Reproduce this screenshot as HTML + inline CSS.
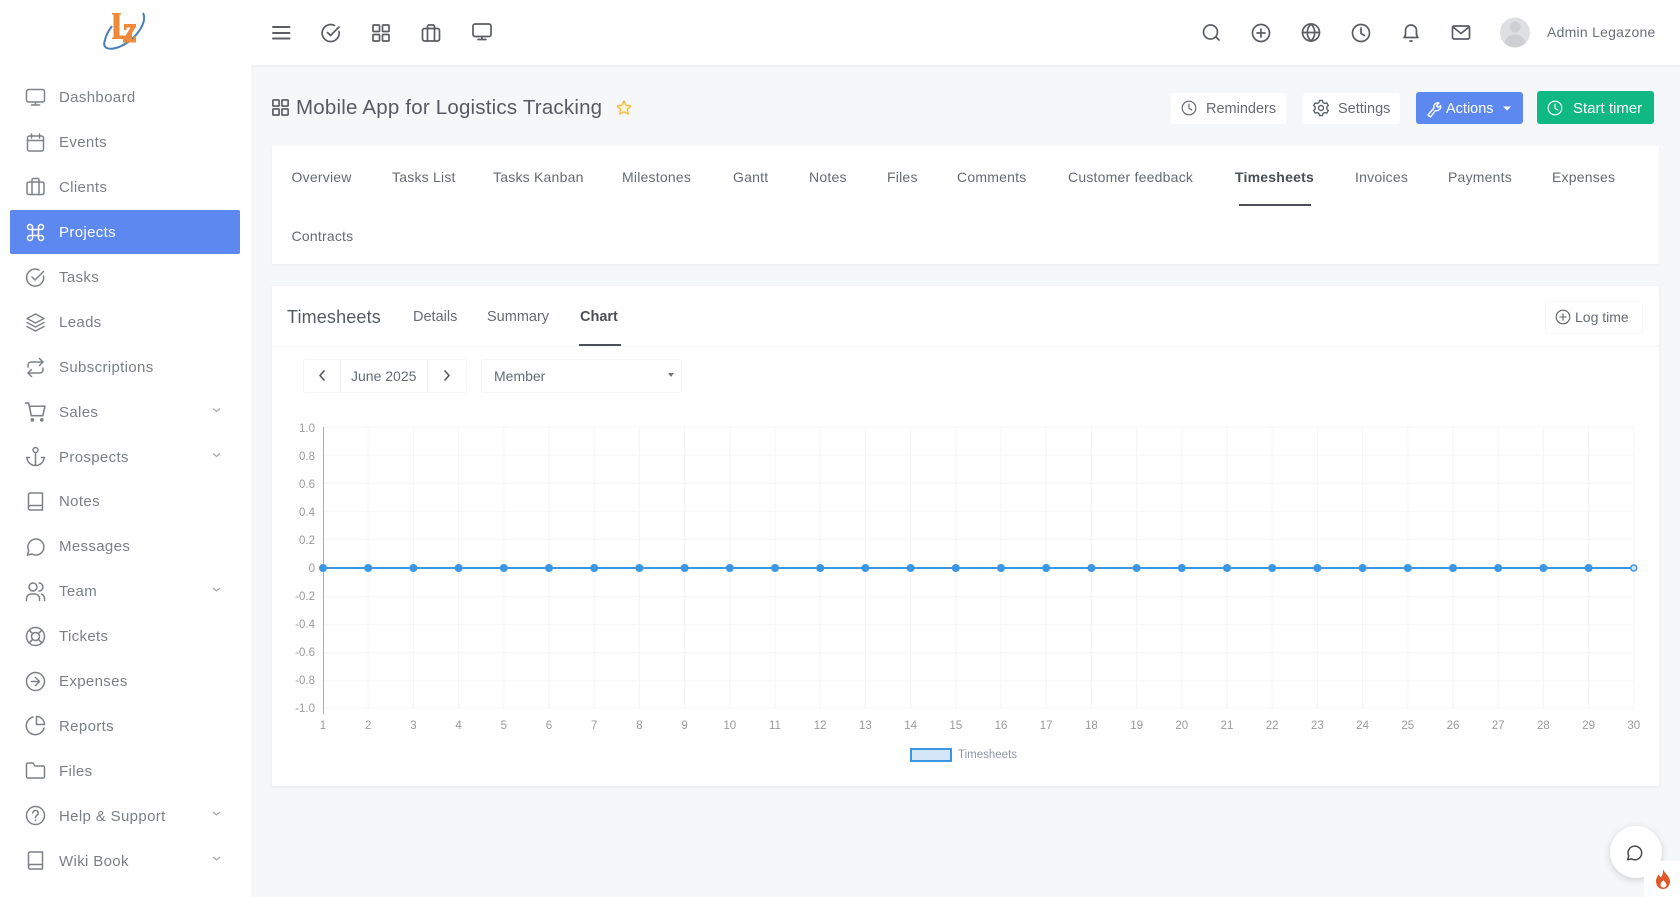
<!DOCTYPE html>
<html lang="en"><head><meta charset="utf-8"><title>Timesheets</title>
<style>
html,body{margin:0;padding:0;width:1680px;height:897px;overflow:hidden;background:#f6f7f8;font-family:"Liberation Sans",sans-serif;color:#6b7078}
.a{position:absolute}
.t{position:absolute;white-space:nowrap;line-height:20px;height:20px}
.s{font-size:15px;color:#7b7f86;left:59px;letter-spacing:.35px}
.tab{font-size:14px;color:#666b73;top:166.500px;letter-spacing:.22px}
.sub{font-size:14.500px;color:#666b73;top:307px}
.btn{position:absolute;background:#fff;border-radius:3px}
.yl{position:absolute;width:30px;left:285px;text-align:right;font-size:11.500px;line-height:14px;color:#9a9a9a}
.xl{position:absolute;width:30px;top:719px;text-align:center;font-size:11.500px;line-height:14px;color:#9a9a9a}
svg{position:absolute;left:0;top:0;overflow:visible}
</style></head><body>
<div class="a" style="left:0;top:0;width:1680px;height:65px;background:#fff"></div>
<div class="a" style="left:0;top:65px;width:1680px;height:2px;background:#eff0f1"></div>
<div class="a" style="left:0;top:65px;width:251px;height:832px;background:#fff"></div>
<div class="a" style="left:10px;top:210px;width:230px;height:44px;background:#5d88f0;border-radius:2px"></div>
<div class="a" style="left:272px;top:146px;width:1387px;height:118px;background:#fff;box-shadow:0 1px 2px #eceef0"></div>
<div class="a" style="left:272px;top:286px;width:1387px;height:500px;background:#fff;box-shadow:0 1px 3px #e6e8ea"></div>
<div class="a" style="left:272px;top:346px;width:1387px;height:1px;background:#f4f5f6"></div>
<div class="a" style="left:1239px;top:204px;width:72px;height:2px;background:#4c5056"></div>
<div class="a" style="left:579px;top:344px;width:42px;height:2px;background:#4c5056"></div>
<div class="btn" style="left:1171px;top:93px;width:116px;height:31px"></div>
<div class="btn" style="left:1303px;top:93px;width:97px;height:31px"></div>
<div class="btn" style="left:1416px;top:92px;width:107px;height:32px;background:#5d88f0"></div>
<div class="btn" style="left:1537px;top:91px;width:117px;height:33px;background:#10b981"></div>
<div class="btn" style="left:1545px;top:301px;width:96px;height:31px;border:1px solid #f5f6f7"></div>
<div class="btn" style="left:303px;top:359px;width:162px;height:32px;border:1px solid #f4f5f6"></div>
<div class="a" style="left:340px;top:359px;width:1px;height:33px;background:#f4f5f6"></div>
<div class="a" style="left:427px;top:359px;width:1px;height:33px;background:#f4f5f6"></div>
<div class="btn" style="left:481px;top:359px;width:199px;height:32px;border:1px solid #f4f5f6"></div>
<div class="a" style="left:1610px;top:826px;width:52px;height:52px;border-radius:50%;background:#fff;box-shadow:0 2px 8px rgba(0,0,0,.16)"></div>
<div class="a" style="left:1644px;top:861px;width:36px;height:36px;background:#fff"></div>

<svg width="1680" height="897" viewBox="0 0 1680 897">
<defs>
<symbol id="mon" viewBox="0 0 20 20"><rect x="1" y="2" width="18" height="12.500" rx="2"/><path d="M10 14.500v3M6 17.500h8"/></symbol>
<symbol id="cal" viewBox="0 0 20 20"><rect x="2" y="3.500" width="16" height="15" rx="2"/><path d="M2 8h16M6 1.500v4M14 1.500v4"/></symbol>
<symbol id="brief" viewBox="0 0 20 20"><rect x="1.500" y="5.500" width="17" height="12.500" rx="2"/><path d="M6.500 18V3.500a1.500 1.500 0 0 1 1.500-1.500h4a1.500 1.500 0 0 1 1.500 1.500V18"/></symbol>
<symbol id="cmd" viewBox="0 0 20 20"><path d="M7 7h6v6H7zM7 7V4.500A2.500 2.500 0 1 0 4.500 7H7M13 7h2.500A2.500 2.500 0 1 0 13 4.500V7M13 13v2.500a2.500 2.500 0 1 0 2.500-2.500H13M7 13H4.500A2.500 2.500 0 1 0 7 15.500V13"/></symbol>
<symbol id="chk" viewBox="0 0 20 20"><path d="M18 8.500A8.500 8.500 0 1 1 13.500 2.500M6.500 9.500l3 3L18 4"/></symbol>
<symbol id="lay" viewBox="0 0 20 20"><path d="M10 1.500l8.500 4.500-8.500 4.500L1.500 6zM1.500 10l8.500 4.500 8.500-4.500M1.500 14l8.500 4.500 8.500-4.500"/></symbol>
<symbol id="rep" viewBox="0 0 20 20"><path d="M14 1l3.500 3.500L14 8M2.500 9.500v-2a3 3 0 0 1 3-3h12M6 19l-3.500-3.500L6 12M17.500 10.500v2a3 3 0 0 1-3 3h-12"/></symbol>
<symbol id="cart" viewBox="0 0 20 20"><path d="M0 1.500h3.500l2.500 12h11l2-9H4.500"/><circle cx="7" cy="17.500" r="1" fill="currentColor"/><circle cx="16" cy="17.500" r="1" fill="currentColor"/></symbol>
<symbol id="anc" viewBox="0 0 20 20"><circle cx="10" cy="3.500" r="2.500"/><path d="M10 6v13M1 11h3M16 11h3M1.500 11a8.500 8 0 0 0 17 0"/></symbol>
<symbol id="book" viewBox="0 0 20 20"><path d="M3 16V3a1.500 1.500 0 0 1 1.500-1.500H17V18.500H4.500A2 2 0 0 1 3 16a2 2 0 0 1 1.500-2H17"/></symbol>
<symbol id="msg" viewBox="0 0 20 20"><path d="M2 18.500l1.200-4.500A8 8 0 1 1 6.500 17.500z"/></symbol>
<symbol id="team" viewBox="0 0 20 20"><circle cx="7.500" cy="5.500" r="4"/><path d="M1 19v-2a4.500 4.500 0 0 1 4.500-4.500h4A4.500 4.500 0 0 1 14 17v2M13.500 1.500a4 4 0 0 1 0 8M16 12.800A4.500 4.500 0 0 1 19 17v2"/></symbol>
<symbol id="ring" viewBox="0 0 20 20"><circle cx="10" cy="10" r="9"/><circle cx="10" cy="10" r="4"/><path d="M3.700 3.700l3.500 3.500M12.800 12.800l3.500 3.500M16.300 3.700l-3.500 3.500M7.200 12.800l-3.500 3.500"/></symbol>
<symbol id="arr" viewBox="0 0 20 20"><circle cx="10" cy="10" r="9"/><path d="M10 6l4 4-4 4M6 10h8"/></symbol>
<symbol id="pie" viewBox="0 0 20 20"><path d="M18.500 12.500A9 9 0 1 1 7.500 1.500M11 1a8 8 0 0 1 8 8h-8z"/></symbol>
<symbol id="fold" viewBox="0 0 20 20"><path d="M1 4a1.500 1.500 0 0 1 1.500-1.500h5l2 3h8A1.500 1.500 0 0 1 19 7v9a1.500 1.500 0 0 1-1.500 1.500h-15A1.500 1.500 0 0 1 1 16z"/></symbol>
<symbol id="help" viewBox="0 0 20 20"><circle cx="10" cy="10" r="9"/><path d="M7.300 7.500a2.700 2.700 0 1 1 4.200 2.300c-1 .7-1.500 1.100-1.500 2.200M10 14.500v.5"/></symbol>
<symbol id="grid" viewBox="0 0 20 20"><rect x="2" y="2" width="6.500" height="6.500" rx=".8"/><rect x="11.500" y="2" width="6.500" height="6.500" rx=".8"/><rect x="2" y="11.500" width="6.500" height="6.500" rx=".8"/><rect x="11.500" y="11.500" width="6.500" height="6.500" rx=".8"/></symbol>
<symbol id="clock" viewBox="0 0 20 20"><circle cx="10" cy="10" r="8.500"/><path d="M10 5v5.500l3.500 2"/></symbol>
<symbol id="plus" viewBox="0 0 20 20"><circle cx="10" cy="10" r="8.500"/><path d="M10 6v8M6 10h8"/></symbol>
</defs>

<!-- sidebar icons -->
<g fill="none" stroke="#7d8187" stroke-width="1.500" stroke-linecap="round" stroke-linejoin="round" color="#7d8187">
<use href="#mon" x="25.500" y="87.500" width="20" height="20"/>
<use href="#cal" x="25.500" y="132.500" width="20" height="20"/>
<use href="#brief" x="25.500" y="176.500" width="20" height="20"/>
<use href="#cmd" x="25.500" y="222.500" width="20" height="20" stroke="#fff"/>
<use href="#chk" x="25.500" y="267.500" width="20" height="20"/>
<use href="#lay" x="25.500" y="312.500" width="20" height="20"/>
<use href="#rep" x="25.500" y="357.500" width="20" height="20"/>
<use href="#cart" x="25" y="401.500" width="21" height="21"/>
<use href="#anc" x="25.500" y="446.500" width="20" height="20"/>
<use href="#book" x="25.500" y="491.500" width="20" height="20"/>
<use href="#msg" x="25.500" y="536.500" width="20" height="20"/>
<use href="#team" x="25.500" y="581.500" width="20" height="20"/>
<use href="#ring" x="25.500" y="626.500" width="20" height="20"/>
<use href="#arr" x="25.500" y="671.500" width="20" height="20"/>
<use href="#pie" x="25.500" y="715.500" width="20" height="20"/>
<use href="#fold" x="25.500" y="760.500" width="20" height="20"/>
<use href="#help" x="25.500" y="805.500" width="20" height="20"/>
<use href="#book" x="25.500" y="850.500" width="20" height="20"/>
</g>
<path d="M213 408.500l3.500 3 3.500-3M213 453.500l3.500 3 3.500-3M213 588l3.500 3 3.500-3M213 812l3.500 3 3.500-3M213 857l3.500 3 3.500-3" fill="none" stroke="#a4a7ab" stroke-width="1.200"/>

<!-- top icons -->
<g fill="none" stroke="#5a5e63" stroke-width="1.700" stroke-linecap="round" stroke-linejoin="round">
<path d="M273 27h16.500M273 33h16.500M273 38.500h16.500" stroke-width="1.900"/>
<use href="#chk" x="321" y="23" width="20" height="20"/>
<use href="#grid" x="371" y="23" width="20" height="20"/>
<use href="#brief" x="421" y="23" width="20" height="20"/>
<use href="#mon" x="472" y="22" width="20" height="20"/>
<path d="M1219 40l-3-3"/><circle cx="1210.500" cy="32" r="7"/>
<use href="#plus" x="1251" y="23" width="20" height="20"/>
<circle cx="1311" cy="32.500" r="8.500"/><path d="M1302.500 32.500h17M1311 24c-5 5-5 12 0 17M1311 24c5 5 5 12 0 17"/>
<use href="#clock" x="1351" y="23" width="20" height="20"/>
<path d="M1404 37.500c2-1.500 1.500-4 1.500-7a5.500 5.500 0 0 1 11 0c0 3-.5 5.500 1.500 7zM1410 41h2"/>
<rect x="1452.500" y="26" width="17" height="13" rx="1.500"/><path d="M1453 27l8 6.500 8-6.500"/>
</g>

<!-- avatar -->
<circle cx="1515" cy="32.500" r="15" fill="#dedfe2"/>
<circle cx="1515" cy="27" r="5.500" fill="#cdcfd3"/>
<path d="M1504.500 43c1-6 5.500-8.500 10.500-8.500s9.500 2.500 10.500 8.500a15 15 0 0 1-21 0z" fill="#cdcfd3"/>

<!-- logo -->
<path d="M143 13C148 22 136 40 119 47 108 51 102 48 105 40 106 35 109 30 112 26" fill="none" stroke="#4a80b8" stroke-width="2"/>
<path d="M112 13h9v1.500h-1.500V35.500h9V31h3.500v8H112v-1.500h1.500V14.500H112z" fill="#ef8a3a"/>
<path d="M124 24h12v2.500l-7.500 12.500h5V36h2.500v6.500H123V40l7.500-12.500h-4V30H124z" fill="#ef8a3a"/>

<!-- title icons -->
<use href="#grid" x="271" y="98" width="19" height="19" fill="none" stroke="#55595f" stroke-width="1.700"/>
<path d="M624 101l2.100 4.300 4.700.700-3.400 3.300.8 4.700-4.200-2.200-4.200 2.200.8-4.700-3.400-3.300 4.700-.700z" fill="#fdf3d6" stroke="#f3c04e" stroke-width="1.500" stroke-linejoin="round"/>

<!-- button icons -->
<g fill="none" stroke="#5f6368" stroke-width="1.400" stroke-linecap="round" stroke-linejoin="round">
<use href="#clock" x="1181" y="100" width="16" height="16"/>
<circle cx="1321" cy="108" r="2.500"/>
<path d="M1319.500 100.500h3l.5 2 1.800 1 2-.6 1.500 2.600-1.500 1.500v2l1.500 1.500-1.500 2.600-2-.6-1.800 1-.5 2h-3l-.5-2-1.800-1-2 .6-1.500-2.600 1.500-1.500v-2l-1.500-1.500 1.500-2.600 2 .6 1.800-1z"/>
<use href="#plus" x="1555" y="309" width="16" height="16"/>
</g>
<g fill="none" stroke="#fff" stroke-width="1.400" stroke-linecap="round" stroke-linejoin="round">
<path d="M1428 115l6-7a4 4 0 0 1 5-5l-2.500 2.500 1.500 2 2.500-2a4 4 0 0 1-5 5l-5 6.500z"/>
<use href="#clock" x="1547" y="100" width="16" height="16"/>
</g>
<path d="M1503 106.500h8l-4 4z" fill="#fff"/>
<!-- date nav -->
<path d="M324 371l-4 4.500 4 4.500M445 371l4 4.500-4 4.500" fill="none" stroke="#55595f" stroke-width="1.600" stroke-linecap="round" stroke-linejoin="round"/>
<path d="M668 373h6l-3 4z" fill="#777"/>

<!-- chart grid -->
<path d="M368.200 427V708M413.400 427V708M458.600 427V708M503.800 427V708M549 427V708M594.200 427V708M639.400 427V708M684.600 427V708M729.800 427V708M775 427V708M820.200 427V708M865.400 427V708M910.600 427V708M955.800 427V708M1001 427V708M1046.200 427V708M1091.400 427V708M1136.600 427V708M1181.800 427V708M1227 427V708M1272.200 427V708M1317.400 427V708M1362.600 427V708M1407.800 427V708M1453 427V708M1498.200 427V708M1543.400 427V708M1588.600 427V708M1633.800 427V708M323 427H1634M323 455.100H1634M323 483.200H1634M323 511.300H1634M323 539.400H1634M323 596.600H1634M323 624.700H1634M323 652.800H1634M323 680.900H1634M323 708H1634" stroke="#f5f5f6" stroke-width="1" fill="none"/>
<path d="M323.500 427V714" stroke="#b0b0b0" stroke-width="1"/>
<path d="M323 568H1634" stroke="#3b96e4" stroke-width="2"/>
<g fill="#3b96e4" stroke="#3b96e4" stroke-width="1">
<circle cx="323" cy="568" r="3.500"/><circle cx="368.200" cy="568" r="3.500"/><circle cx="413.400" cy="568" r="3.500"/><circle cx="458.600" cy="568" r="3.500"/><circle cx="503.800" cy="568" r="3.500"/><circle cx="549" cy="568" r="3.500"/><circle cx="594.200" cy="568" r="3.500"/><circle cx="639.400" cy="568" r="3.500"/><circle cx="684.600" cy="568" r="3.500"/><circle cx="729.800" cy="568" r="3.500"/><circle cx="775" cy="568" r="3.500"/><circle cx="820.200" cy="568" r="3.500"/><circle cx="865.400" cy="568" r="3.500"/><circle cx="910.600" cy="568" r="3.500"/><circle cx="955.800" cy="568" r="3.500"/><circle cx="1001" cy="568" r="3.500"/><circle cx="1046.200" cy="568" r="3.500"/><circle cx="1091.400" cy="568" r="3.500"/><circle cx="1136.600" cy="568" r="3.500"/><circle cx="1181.800" cy="568" r="3.500"/><circle cx="1227" cy="568" r="3.500"/><circle cx="1272.200" cy="568" r="3.500"/><circle cx="1317.400" cy="568" r="3.500"/><circle cx="1362.600" cy="568" r="3.500"/><circle cx="1407.800" cy="568" r="3.500"/><circle cx="1453" cy="568" r="3.500"/><circle cx="1498.200" cy="568" r="3.500"/><circle cx="1543.400" cy="568" r="3.500"/><circle cx="1588.600" cy="568" r="3.500"/>
<circle cx="1633.800" cy="568" r="3" fill="#cfe5f8" stroke-width="1.500"/>
</g>
<rect x="911" y="749" width="40" height="12" fill="#d3e7f8" stroke="#3b96e4" stroke-width="2"/>

<!-- chat & flame -->
<use href="#msg" x="1626" y="844" width="17" height="17" fill="none" stroke="#444" stroke-width="1.700" stroke-linejoin="round"/>
<path d="M1663 869c1 4 6 6 7 12 0 5-3 8-7 8s-7-3-7-8c0-3 2-5 3-7 0 2 1 3 2 3 2-2 2-5 2-8zm.5 11c-2 2-3 3-3 5 0 1.500 1.500 2.500 3 2.500s3-1 3-2.500c0-2-2-3-3-5z" fill="#e0592a" fill-rule="evenodd"/>
</svg>

<!-- sidebar text -->
<div class="t s" style="top:88px">Dashboard</div>
<div class="t s" style="top:133px">Events</div>
<div class="t s" style="top:178px">Clients</div>
<div class="t s" style="top:223px;color:#fff">Projects</div>
<div class="t s" style="top:268px">Tasks</div>
<div class="t s" style="top:313px">Leads</div>
<div class="t s" style="top:358px">Subscriptions</div>
<div class="t s" style="top:403px">Sales</div>
<div class="t s" style="top:448px">Prospects</div>
<div class="t s" style="top:492px">Notes</div>
<div class="t s" style="top:537px">Messages</div>
<div class="t s" style="top:582px">Team</div>
<div class="t s" style="top:627px">Tickets</div>
<div class="t s" style="top:672px">Expenses</div>
<div class="t s" style="top:717px">Reports</div>
<div class="t s" style="top:762px">Files</div>
<div class="t s" style="top:807px">Help &amp; Support</div>
<div class="t s" style="top:852px">Wiki Book</div>

<!-- top / title -->
<div class="t" style="left:1547px;top:22px;font-size:14px;color:#6b6f76;letter-spacing:.25px">Admin Legazone</div>
<div class="t" style="left:296px;top:98px;font-size:20.500px;color:#565b63;letter-spacing:.2px">Mobile App for Logistics Tracking</div>
<div class="t" style="left:1206px;top:99px;font-size:14.500px;color:#666b73">Reminders</div>
<div class="t" style="left:1338px;top:99px;font-size:14.500px;color:#666b73">Settings</div>
<div class="t" style="left:1446px;top:99px;font-size:14.500px;color:#fff">Actions</div>
<div class="t" style="left:1573px;top:99px;font-size:15px;color:#fff">Start timer</div>

<!-- tabs -->
<div class="t tab" style="left:291.500px">Overview</div>
<div class="t tab" style="left:392px">Tasks List</div>
<div class="t tab" style="left:493px">Tasks Kanban</div>
<div class="t tab" style="left:622px">Milestones</div>
<div class="t tab" style="left:733px">Gantt</div>
<div class="t tab" style="left:809px">Notes</div>
<div class="t tab" style="left:887px">Files</div>
<div class="t tab" style="left:957px">Comments</div>
<div class="t tab" style="left:1068px">Customer feedback</div>
<div class="t tab" style="left:1235px;font-weight:bold;color:#4a4e55">Timesheets</div>
<div class="t tab" style="left:1355px">Invoices</div>
<div class="t tab" style="left:1448px">Payments</div>
<div class="t tab" style="left:1552px">Expenses</div>
<div class="t tab" style="left:291.500px;top:226px">Contracts</div>

<!-- timesheets header -->
<div class="t" style="left:287px;top:307px;font-size:18px;letter-spacing:.15px;color:#565b63">Timesheets</div>
<div class="t sub" style="left:413px">Details</div>
<div class="t sub" style="left:487px">Summary</div>
<div class="t sub" style="left:580px;font-weight:bold;color:#4a4e55">Chart</div>
<div class="t" style="left:1575px;top:307px;font-size:14px;color:#666b73">Log time</div>
<div class="t" style="left:351px;top:366px;font-size:14px;color:#666b73">June 2025</div>
<div class="t" style="left:494px;top:366px;font-size:14px;color:#666b73">Member</div>

<!-- y labels -->
<div class="yl" style="top:422px">1.0</div>
<div class="yl" style="top:450px">0.8</div>
<div class="yl" style="top:478px">0.6</div>
<div class="yl" style="top:506px">0.4</div>
<div class="yl" style="top:534px">0.2</div>
<div class="yl" style="top:562px">0</div>
<div class="yl" style="top:590px">-0.2</div>
<div class="yl" style="top:618px">-0.4</div>
<div class="yl" style="top:646px">-0.6</div>
<div class="yl" style="top:674px">-0.8</div>
<div class="yl" style="top:702px">-1.0</div>

<!-- x labels -->
<div class="xl" style="left:308px">1</div><div class="xl" style="left:353.200px">2</div><div class="xl" style="left:398.400px">3</div><div class="xl" style="left:443.600px">4</div><div class="xl" style="left:488.800px">5</div><div class="xl" style="left:534px">6</div><div class="xl" style="left:579.200px">7</div><div class="xl" style="left:624.400px">8</div><div class="xl" style="left:669.600px">9</div><div class="xl" style="left:714.800px">10</div><div class="xl" style="left:760px">11</div><div class="xl" style="left:805.200px">12</div><div class="xl" style="left:850.400px">13</div><div class="xl" style="left:895.600px">14</div><div class="xl" style="left:940.800px">15</div><div class="xl" style="left:986px">16</div><div class="xl" style="left:1031.200px">17</div><div class="xl" style="left:1076.400px">18</div><div class="xl" style="left:1121.600px">19</div><div class="xl" style="left:1166.800px">20</div><div class="xl" style="left:1212px">21</div><div class="xl" style="left:1257.200px">22</div><div class="xl" style="left:1302.400px">23</div><div class="xl" style="left:1347.600px">24</div><div class="xl" style="left:1392.800px">25</div><div class="xl" style="left:1438px">26</div><div class="xl" style="left:1483.200px">27</div><div class="xl" style="left:1528.400px">28</div><div class="xl" style="left:1573.600px">29</div><div class="xl" style="left:1618.800px">30</div>

<div class="t" style="left:958px;top:745px;font-size:11.500px;color:#8f96a8">Timesheets</div>
</body></html>
